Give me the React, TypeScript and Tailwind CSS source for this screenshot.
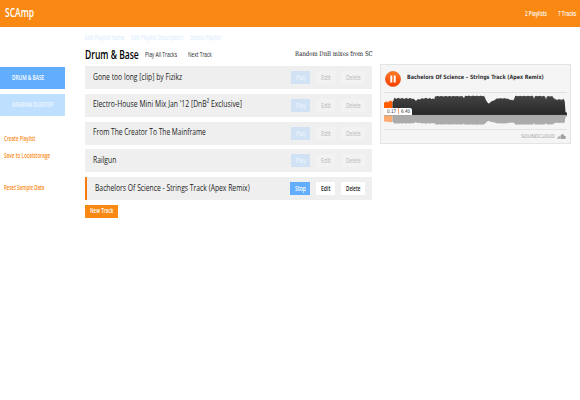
import { useLayoutEffect, useRef } from 'react';
import { clsx } from 'clsx';

const sans = "font-['Open_Sans','Noto_Sans',sans-serif]";

// Condensed label: squeezes its text horizontally to the given width.
function Label({ text, width, className }: { text: string; width: number; className?: string }) {
  const inner = useRef<HTMLSpanElement>(null);
  useLayoutEffect(() => {
    if (inner.current) {
      inner.current.style.transform = `scaleX(${width / inner.current.offsetWidth})`;
    }
  }, [text, width]);
  return (
    <span className={clsx('block shrink-0 whitespace-nowrap', className)} style={{ width }}>
      <span ref={inner} className="inline-block origin-left align-top">{text}</span>
    </span>
  );
}

const tracks = [
  { title: 'Gone too long [clip] by Fizikz', width: 89.5 },
  { title: "Electro-House Mini Mix Jan '12 [DnB² Exclusive]", width: 149 },
  { title: 'From The Creator To The Mainframe', width: 112.5 },
  { title: 'Railgun', width: 23.5 },
  { title: 'Bachelors Of Science - Strings Track (Apex Remix)', width: 154.5, playing: true },
];

function TrackRow({ title, width, playing }: { title: string; width: number; playing?: boolean }) {
  return (
    <li
      className={clsx(
        'flex h-[23px] items-center bg-[#efefef] pr-[7px]',
        playing ? 'border-l-2 border-[#f97a10] pl-[7.5px]' : 'pl-[7.5px]',
      )}
    >
      <Label text={title} width={width} className="mb-[2px] text-[9.5px] leading-[20px] font-medium text-[#1c1c1c]" />
      <div className="ml-auto flex items-center gap-[6px] text-[6.4px] leading-[13px]">
        <button
          className={clsx(
            'flex h-[13px] justify-center',
            playing ? 'w-[20px] bg-[#62aefd] font-semibold text-white' : 'w-[19px] bg-[#d0e2f4] text-[#f2f8ff]',
          )}
        >
          <Label text={playing ? 'Stop' : 'Play'} width={playing ? 11 : 9.5} />
        </button>
        <button className={clsx('flex h-[13px] w-[19px] justify-center', playing ? 'bg-white font-semibold text-[#222]' : 'bg-[#f2f2f2] text-[#b8b8b8]')}>
          <Label text="Edit" width={9.5} />
        </button>
        <button className={clsx('flex h-[13px] w-[24px] justify-center', playing ? 'bg-white font-semibold text-[#222]' : 'bg-[#f2f2f2] text-[#b8b8b8]')}>
          <Label text="Delete" width={14.5} />
        </button>
      </div>
    </li>
  );
}

// Loudness envelope: [x, top] pairs in a 183 x 30 box whose baseline is y = 20.
const envelope: [number, number][] = [
  [0, 7], [4, 7], [5, 6], [8.5, 6.2], [9.5, 6], [10, 3.2], [20, 3.4], [29, 3.4], [31, 5.4], [36, 4],
  [40, 3.2], [49, 3.6], [50.5, 5], [51, 1.2], [79, 1.2], [80, 3.6], [81, 0.9], [100, 0.9], [102, 5],
  [104.5, 9], [107, 6.5], [109, 6], [113, 3.4], [122, 3.4], [126, 4.6], [129.5, 5.6], [131, 1],
  [149, 1], [150, 3.6], [151, 1], [161, 1.2], [162, 4], [163, 1.2], [169, 1.4], [171, 4.6],
  [180, 4.4], [181, 7], [181.3, 16], [183, 18.5],
];

function outline() {
  const points: string[] = ['M0 20'];
  for (let x = 0; x <= 183; x += 0.75) {
    const i = Math.max(1, envelope.findIndex(([px]) => px >= x));
    const [x0, y0] = envelope[i - 1];
    const [x1, y1] = envelope[i];
    const rough = Math.sin(x * 2.9) * Math.sin(x * 1.3 + 1) * (x < 50 || x > 169 ? 1 : 0.45);
    const y = y0 + ((x - x0) / (x1 - x0)) * (y1 - y0) + rough;
    points.push(`L${x} ${y.toFixed(2)}`);
  }
  return points.join('') + 'V20Z';
}

const wave = outline();

function Waveform() {
  return (
    <svg className="block h-[30px] w-[183px]" viewBox="0 0 183 30">
      <defs>
        <clipPath id="played"><rect width="8.5" height="30" /></clipPath>
        <clipPath id="rest"><rect x="8.5" width="175" height="30" /></clipPath>
        <linearGradient id="dark" x1="0" y1="0" x2="0" y2="1">
          <stop offset="0" stopColor="#444" />
          <stop offset="1" stopColor="#262626" />
        </linearGradient>
      </defs>
      <path d={wave} fill="#ff5e00" clipPath="url(#played)" />
      <path d={wave} fill="url(#dark)" clipPath="url(#rest)" />
      <g transform="translate(0 30) scale(1 -0.48)">
        <path d={wave} fill="#ffab70" clipPath="url(#played)" />
        <path d={wave} fill="#ababab" clipPath="url(#rest)" />
      </g>
      <path d="M0 20.3H183" stroke="#858585" strokeWidth=".7" />
    </svg>
  );
}

function Player() {
  return (
    <section className="mt-[37px] ml-2 h-[80px] w-[191px] border border-[#e4e4e4] bg-[#f5f5f5] px-[3px] font-['DejaVu_Sans',sans-serif]">
      <div className="flex h-[28px] items-center border-b border-[#e2e2e2]">
        <svg className="ml-px block h-[16px] w-[16px]" viewBox="0 0 16 16">
          <defs>
            <linearGradient id="knob" x1="0" y1="0" x2="0" y2="1">
              <stop offset="0" stopColor="#ff7a22" />
              <stop offset="1" stopColor="#fa3c00" />
            </linearGradient>
          </defs>
          <circle cx="8" cy="8" r="7.6" fill="url(#knob)" stroke="#e65313" strokeWidth=".6" />
          <path d="M5.3 4.6h2v6.8h-2zM8.7 4.6h2v6.8h-2z" fill="#fff" />
        </svg>
        <Label
          text="Bachelors Of Science – Strings Track (Apex Remix)"
          width={136.5}
          className="mb-[3px] ml-[6px] text-[5.8px] leading-[8px] font-bold text-[#333]"
        />
      </div>
      <div className="relative mt-[2px]">
        <Waveform />
        <div className="absolute top-[13px] left-0 flex h-[6.5px] w-[28px] items-center rounded-tr-[2px] bg-white text-[5.2px] leading-[7px] text-[#333]">
          <Label text="0.17" width={9.5} className="ml-[2.5px]" />
          <i className="mx-[2px] h-[6px] w-px bg-[#ffa46b]" />
          <Label text="6.40" width={9.5} />
        </div>
      </div>
      <div className="mt-[4px] flex items-center justify-end border-t border-[#e2e2e2] pt-[3px] text-[#a0a0a0]">
        <Label text="SOUNDCLOUD" width={34} className="text-[5px] leading-[7px]" />
        <svg className="mr-px ml-[2px] block h-[5px] w-[9px]" viewBox="0 0 18 10" fill="#a0a0a0">
          <path d="M0 6.500h1.200v3H0zM2 5h1.400v5H2zM4.200 4h1.400v6H4.200zM6.400 3h1.200v7H6.400zM8.200 1q4.500-2.500 6 2.500 3.600-.7 3.600 3 0 3.500-3.200 3.500H8.200z" />
        </svg>
      </div>
    </section>
  );
}

export default function App() {
  return (
    <div className={clsx('h-[400px] w-[580px] overflow-hidden bg-white', sans)}>
      <header className="flex h-[27px] items-center border-b border-[#f5861a] bg-[#f98913] pr-[3.5px] pl-[5px] text-white">
        <Label text="SCAmp" width={29} className="text-[12.3px] leading-[26px] font-semibold" />
        <div className="ml-auto flex gap-[11px] pt-px text-[6.5px] leading-[25px] font-semibold">
          <Label text="2 Playlists" width={22} />
          <Label text="7 Tracks" width={18.5} />
        </div>
      </header>

      <div className="flex">
        <aside className="w-[65px] shrink-0 pt-[40px] text-[6.3px] font-semibold">
          <div className="flex h-[22px] items-center bg-[#62aefd] pl-[11.5px] text-white">
            <Label text="DRUM & BASE" width={32} />
          </div>
          <div className="mt-[5px] flex h-[22px] items-center bg-[#bfdfff] pl-[11.5px] text-[#f0f8ff]">
            <Label text="ARABIAN DUBSTEP" width={41.5} />
          </div>
          <nav className="pl-[4px] leading-[8px] text-[#fa8913]">
            <Label text="Create Playlist" width={31} className="mt-[19px]" />
            <Label text="Save to Localstorage" width={46} className="mt-[9px]" />
            <Label text="Reset Sample Data" width={40.5} className="mt-[24px]" />
          </nav>
        </aside>

        <main className="ml-[20px] w-[287px] shrink-0">
          <div className="flex gap-[6px] pt-[7px] text-[6.3px] leading-[8px] text-[#d6ebff]">
            <Label text="Edit Playlist Name" width={40} />
            <Label text="Edit Playlist Description" width={52.5} />
            <Label text="Delete Playlist" width={31} />
          </div>
          <div className="flex h-[24px] items-center pt-[2px]">
            <Label text="Drum & Base" width={54} className="text-[12.3px] leading-[22px] font-semibold text-black" />
            <Label text="Play All Tracks" width={32} className="ml-[6px] text-[6.4px] leading-[22px] font-medium text-[#222]" />
            <Label text="Next Track" width={24} className="ml-[10.5px] text-[6.4px] leading-[22px] font-medium text-[#222]" />
            <Label
              text="Random DnB mixes from SC"
              width={77.5}
              className="mb-[3px] ml-auto font-['DejaVu_Serif',serif] text-[6.6px] leading-[18px] text-[#111]"
            />
          </div>
          <ul className="flex flex-col gap-[4.75px]">
            {tracks.map((t) => (
              <TrackRow key={t.title} {...t} />
            ))}
          </ul>
          <button className="mt-[5px] flex h-[12.5px] w-[33px] items-center justify-center bg-[#fa8913] text-[6.4px] leading-[12px] font-semibold text-white">
            <Label text="New Track" width={23} />
          </button>
        </main>

        <Player />
      </div>
    </div>
  );
}
